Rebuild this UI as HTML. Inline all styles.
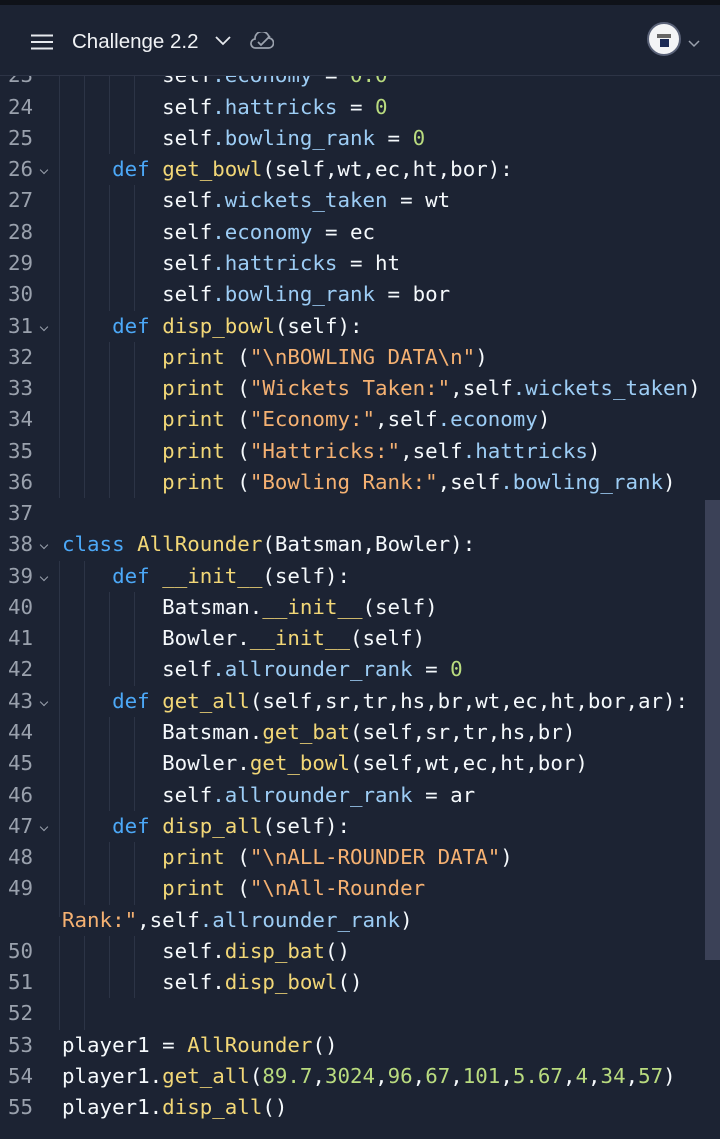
<!DOCTYPE html>
<html><head><style>
*{margin:0;padding:0;box-sizing:border-box}
body{width:720px;height:1139px;background:#1c2333;overflow:hidden;position:relative;font-family:"DejaVu Sans Mono","Liberation Mono",monospace}
#strip{position:absolute;left:0;top:0;width:720px;height:5px;background:#0f1219}
#hdr{position:absolute;left:0;top:5px;width:720px;height:71px;background:#1c2333;border-bottom:1px solid #2d3446;z-index:5}
#title{position:absolute;left:72px;top:25px;font:20.5px "Liberation Sans",sans-serif;color:#f0f2f5}
#code{position:absolute;left:0;top:60.4px;width:720px}
.r{height:31.27px;line-height:31.27px;font-size:20.8px;white-space:pre;position:relative;color:#f5f9fc}
.n{position:absolute;left:0;width:33px;text-align:right;color:#9aa1ad}
.f{position:absolute;left:39px;top:16px;width:11px;height:7px}
.f::before{content:"";position:absolute;left:2px;top:-3px;width:5px;height:5px;border-right:1.5px solid #9aa1ad;border-bottom:1.5px solid #9aa1ad;transform:rotate(45deg)}
.c{position:absolute;left:62px}
.g{position:absolute;top:0;width:1px;height:100%;background:#2c3446}
.k{color:#4ca8f7}.y{color:#f2d777}.s{color:#f5b172}.d{color:#b9db7f}.a{color:#9dcdf5}
#sb{position:absolute;left:705px;top:500px;width:15px;height:460px;background:#3b4157}
</style></head><body>
<div id="strip"></div>
<div id="hdr">
<svg style="position:absolute;left:31px;top:29px" width="22" height="16"><path d="M0 1.5H22M0 8H22M0 14.5H22" stroke="#e6e9ee" stroke-width="2"/></svg>
<div id="title">Challenge 2.2</div>
<svg style="position:absolute;left:215px;top:31px" width="16" height="10"><path d="M1 1L8 8L15 1" stroke="#e6e9ee" stroke-width="1.8" fill="none"/></svg>
<svg style="position:absolute;left:250px;top:27px" width="24" height="18"><path d="M6 16H18A5 5 0 0 0 19 6A7 7 0 0 0 5 7A4.5 4.5 0 0 0 6 16Z" stroke="#9aa1ad" stroke-width="1.7" fill="none"/><path d="M8 10L11 13L20 4" stroke="#9aa1ad" stroke-width="1.7" fill="none"/></svg>
<div style="position:absolute;left:647px;top:17px;width:34px;height:34px;border-radius:50%;background:#f3f4f6;border:2px solid #5a6278"></div>
<div style="position:absolute;left:660px;top:34px;width:9px;height:8px;background:#1c2a55"></div>
<div style="position:absolute;left:657px;top:29px;width:14px;height:4px;background:#666"></div>
<svg style="position:absolute;left:688px;top:35px" width="12" height="8"><path d="M1 1L6 6L11 1" stroke="#9aa1ad" stroke-width="1.5" fill="none"/></svg>
</div>
<div id="code">
<div class="r"><span class="n">23</span><i class="g" style="left:59px"></i><i class="g" style="left:84px"></i><i class="g" style="left:109px"></i><i class="g" style="left:134px"></i><span class="c">        self<span class="a">.economy</span> = <span class="d">0.0</span></span></div>
<div class="r"><span class="n">24</span><i class="g" style="left:59px"></i><i class="g" style="left:84px"></i><i class="g" style="left:109px"></i><i class="g" style="left:134px"></i><span class="c">        self<span class="a">.hattricks</span> = <span class="d">0</span></span></div>
<div class="r"><span class="n">25</span><i class="g" style="left:59px"></i><i class="g" style="left:84px"></i><i class="g" style="left:109px"></i><i class="g" style="left:134px"></i><span class="c">        self<span class="a">.bowling_rank</span> = <span class="d">0</span></span></div>
<div class="r"><span class="n">26</span><span class="f"></span><i class="g" style="left:59px"></i><i class="g" style="left:84px"></i><span class="c">    <span class="k">def</span> <span class="y">get_bowl</span>(self,wt,ec,ht,bor):</span></div>
<div class="r"><span class="n">27</span><i class="g" style="left:59px"></i><i class="g" style="left:84px"></i><i class="g" style="left:109px"></i><i class="g" style="left:134px"></i><span class="c">        self<span class="a">.wickets_taken</span> = wt</span></div>
<div class="r"><span class="n">28</span><i class="g" style="left:59px"></i><i class="g" style="left:84px"></i><i class="g" style="left:109px"></i><i class="g" style="left:134px"></i><span class="c">        self<span class="a">.economy</span> = ec</span></div>
<div class="r"><span class="n">29</span><i class="g" style="left:59px"></i><i class="g" style="left:84px"></i><i class="g" style="left:109px"></i><i class="g" style="left:134px"></i><span class="c">        self<span class="a">.hattricks</span> = ht</span></div>
<div class="r"><span class="n">30</span><i class="g" style="left:59px"></i><i class="g" style="left:84px"></i><i class="g" style="left:109px"></i><i class="g" style="left:134px"></i><span class="c">        self<span class="a">.bowling_rank</span> = bor</span></div>
<div class="r"><span class="n">31</span><span class="f"></span><i class="g" style="left:59px"></i><i class="g" style="left:84px"></i><span class="c">    <span class="k">def</span> <span class="y">disp_bowl</span>(self):</span></div>
<div class="r"><span class="n">32</span><i class="g" style="left:59px"></i><i class="g" style="left:84px"></i><i class="g" style="left:109px"></i><i class="g" style="left:134px"></i><span class="c">        <span class="y">print</span> (<span class="s">"\nBOWLING DATA\n"</span>)</span></div>
<div class="r"><span class="n">33</span><i class="g" style="left:59px"></i><i class="g" style="left:84px"></i><i class="g" style="left:109px"></i><i class="g" style="left:134px"></i><span class="c">        <span class="y">print</span> (<span class="s">"Wickets Taken:"</span>,self<span class="a">.wickets_taken</span>)</span></div>
<div class="r"><span class="n">34</span><i class="g" style="left:59px"></i><i class="g" style="left:84px"></i><i class="g" style="left:109px"></i><i class="g" style="left:134px"></i><span class="c">        <span class="y">print</span> (<span class="s">"Economy:"</span>,self<span class="a">.economy</span>)</span></div>
<div class="r"><span class="n">35</span><i class="g" style="left:59px"></i><i class="g" style="left:84px"></i><i class="g" style="left:109px"></i><i class="g" style="left:134px"></i><span class="c">        <span class="y">print</span> (<span class="s">"Hattricks:"</span>,self<span class="a">.hattricks</span>)</span></div>
<div class="r"><span class="n">36</span><i class="g" style="left:59px"></i><i class="g" style="left:84px"></i><i class="g" style="left:109px"></i><i class="g" style="left:134px"></i><span class="c">        <span class="y">print</span> (<span class="s">"Bowling Rank:"</span>,self<span class="a">.bowling_rank</span>)</span></div>
<div class="r"><span class="n">37</span></div>
<div class="r"><span class="n">38</span><span class="f"></span><span class="c"><span class="k">class</span> <span class="y">AllRounder</span>(Batsman,Bowler):</span></div>
<div class="r"><span class="n">39</span><span class="f"></span><i class="g" style="left:59px"></i><i class="g" style="left:84px"></i><span class="c">    <span class="k">def</span> <span class="y">__init__</span>(self):</span></div>
<div class="r"><span class="n">40</span><i class="g" style="left:59px"></i><i class="g" style="left:84px"></i><i class="g" style="left:109px"></i><i class="g" style="left:134px"></i><span class="c">        Batsman.<span class="y">__init__</span>(self)</span></div>
<div class="r"><span class="n">41</span><i class="g" style="left:59px"></i><i class="g" style="left:84px"></i><i class="g" style="left:109px"></i><i class="g" style="left:134px"></i><span class="c">        Bowler.<span class="y">__init__</span>(self)</span></div>
<div class="r"><span class="n">42</span><i class="g" style="left:59px"></i><i class="g" style="left:84px"></i><i class="g" style="left:109px"></i><i class="g" style="left:134px"></i><span class="c">        self<span class="a">.allrounder_rank</span> = <span class="d">0</span></span></div>
<div class="r"><span class="n">43</span><span class="f"></span><i class="g" style="left:59px"></i><i class="g" style="left:84px"></i><span class="c">    <span class="k">def</span> <span class="y">get_all</span>(self,sr,tr,hs,br,wt,ec,ht,bor,ar):</span></div>
<div class="r"><span class="n">44</span><i class="g" style="left:59px"></i><i class="g" style="left:84px"></i><i class="g" style="left:109px"></i><i class="g" style="left:134px"></i><span class="c">        Batsman.<span class="y">get_bat</span>(self,sr,tr,hs,br)</span></div>
<div class="r"><span class="n">45</span><i class="g" style="left:59px"></i><i class="g" style="left:84px"></i><i class="g" style="left:109px"></i><i class="g" style="left:134px"></i><span class="c">        Bowler.<span class="y">get_bowl</span>(self,wt,ec,ht,bor)</span></div>
<div class="r"><span class="n">46</span><i class="g" style="left:59px"></i><i class="g" style="left:84px"></i><i class="g" style="left:109px"></i><i class="g" style="left:134px"></i><span class="c">        self<span class="a">.allrounder_rank</span> = ar</span></div>
<div class="r"><span class="n">47</span><span class="f"></span><i class="g" style="left:59px"></i><i class="g" style="left:84px"></i><span class="c">    <span class="k">def</span> <span class="y">disp_all</span>(self):</span></div>
<div class="r"><span class="n">48</span><i class="g" style="left:59px"></i><i class="g" style="left:84px"></i><i class="g" style="left:109px"></i><i class="g" style="left:134px"></i><span class="c">        <span class="y">print</span> (<span class="s">"\nALL-ROUNDER DATA"</span>)</span></div>
<div class="r"><span class="n">49</span><i class="g" style="left:59px"></i><i class="g" style="left:84px"></i><i class="g" style="left:109px"></i><i class="g" style="left:134px"></i><span class="c">        <span class="y">print</span> (<span class="s">"\nAll-Rounder</span></span></div>
<div class="r"><i class="g" style="left:59px;height:40%"></i><span class="c"><span class="s">Rank:"</span>,self<span class="a">.allrounder_rank</span>)</span></div>
<div class="r"><span class="n">50</span><i class="g" style="left:59px"></i><i class="g" style="left:84px"></i><i class="g" style="left:109px"></i><i class="g" style="left:134px"></i><span class="c">        self.<span class="y">disp_bat</span>()</span></div>
<div class="r"><span class="n">51</span><i class="g" style="left:59px"></i><i class="g" style="left:84px"></i><i class="g" style="left:109px"></i><i class="g" style="left:134px"></i><span class="c">        self.<span class="y">disp_bowl</span>()</span></div>
<div class="r"><span class="n">52</span><i class="g" style="left:59px"></i><i class="g" style="left:84px"></i></div>
<div class="r"><span class="n">53</span><span class="c">player1 = <span class="y">AllRounder</span>()</span></div>
<div class="r"><span class="n">54</span><span class="c">player1.<span class="y">get_all</span>(<span class="d">89.7</span>,<span class="d">3024</span>,<span class="d">96</span>,<span class="d">67</span>,<span class="d">101</span>,<span class="d">5.67</span>,<span class="d">4</span>,<span class="d">34</span>,<span class="d">57</span>)</span></div>
<div class="r"><span class="n">55</span><span class="c">player1.<span class="y">disp_all</span>()</span></div>
</div>
<div id="sb"></div>
</body></html>
